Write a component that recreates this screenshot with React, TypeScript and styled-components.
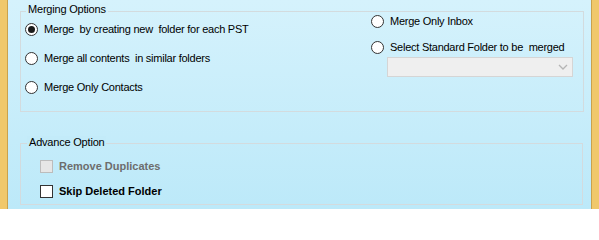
import React from "react";
import styled, { createGlobalStyle } from "styled-components";

const Global = createGlobalStyle`
  html, body { margin: 0; padding: 0; }
  body { font-family: "Liberation Sans", Arial, sans-serif; }
`;

const Frame = styled.div`
  width: 599px;
  height: 209px;
  display: flex;
  overflow: hidden;
`;

const SideBar = styled.div<{ $side: "left" | "right" }>`
  width: 8px;
  flex: none;
  background: #f0c86b;
  ${(p) =>
    p.$side === "left"
      ? "border-right: 1px solid #c9a24e; width: 7px;"
      : "border-left: 1px solid #c9a24e; width: 7px;"}
`;

const Content = styled.div`
  flex: 1;
  background: linear-gradient(to bottom, #d5f2fc 0%, #bce9f9 100%);
  padding: 11px 7px 0 12px;
  display: flex;
  flex-direction: column;
`;

const Group = styled.div<{ $h: number; $mt?: number; $mr?: number }>`
  position: relative;
  box-sizing: border-box;
  height: ${(p) => p.$h}px;
  margin-top: ${(p) => p.$mt ?? 0}px;
  margin-right: ${(p) => p.$mr ?? 0}px;
  border: 1px solid #d3dbde;
`;

const Legend = styled.span<{ $top: number; $left: number; $bg: string }>`
  position: absolute;
  top: ${(p) => p.$top}px;
  left: ${(p) => p.$left}px;
  padding: 0 2px;
  background: ${(p) => p.$bg};
  font-size: 11px;
  line-height: 13px;
  letter-spacing: -0.2px;
  color: #000;
  white-space: pre;
`;

const Columns = styled.div`
  display: grid;
  grid-template-columns: 346px 1fr;
  align-items: start;
  padding-left: 4px;
`;

const Column = styled.div<{ $pt: number; $gap: number }>`
  display: flex;
  flex-direction: column;
  padding-top: ${(p) => p.$pt}px;
  gap: ${(p) => p.$gap}px;
`;

const OptionRow = styled.label`
  display: flex;
  align-items: center;
  height: 16px;
  gap: 6px;
  font-size: 11px;
  letter-spacing: -0.25px;
  color: #000;
  white-space: pre;
`;

const RadioCircle = styled.span<{ $checked?: boolean }>`
  box-sizing: border-box;
  width: 13px;
  height: 13px;
  flex: none;
  border-radius: 50%;
  border: 1px solid #333;
  background: #fff;
  display: flex;
  align-items: center;
  justify-content: center;
  &::after {
    content: "";
    width: 7px;
    height: 7px;
    border-radius: 50%;
    background: ${(p) => (p.$checked ? "#1b1b1b" : "transparent")};
  }
`;

const Combo = styled.div`
  box-sizing: border-box;
  margin-top: 2px;
  margin-left: 16px;
  width: 186px;
  height: 20px;
  background: #efefef;
  border: 1px solid #d5d5d5;
  display: flex;
  align-items: center;
  justify-content: flex-end;
  padding-right: 4px;
`;

const CheckList = styled.div`
  display: flex;
  flex-direction: column;
  gap: 9px;
  padding: 14px 0 0 19px;
`;

const CheckRow = styled.label<{ $disabled?: boolean }>`
  display: flex;
  align-items: center;
  height: 16px;
  gap: 6px;
  font-size: 11px;
  font-weight: bold;
  color: ${(p) => (p.$disabled ? "#6d6d6d" : "#000")};
  white-space: pre;
`;

const CheckBox = styled.span<{ $disabled?: boolean }>`
  box-sizing: border-box;
  width: 13px;
  height: 13px;
  flex: none;
  border: 1px solid ${(p) => (p.$disabled ? "#bcbcbc" : "#333")};
  background: ${(p) => (p.$disabled ? "#e6e6e6" : "#fff")};
`;

const Radio = ({ label, checked }: { label: string; checked?: boolean }) => (
  <OptionRow>
    <RadioCircle $checked={checked} />
    {label}
  </OptionRow>
);

export default function App() {
  return (
    <>
      <Global />
      <Frame>
        <SideBar $side="left" />
        <Content>
          <Group $h={101}>
            <Legend $top={-9} $left={5} $bg="#d4f1fb">
              Merging Options
            </Legend>
            <Columns>
              <Column $pt={9} $gap={13}>
                <Radio checked label="Merge  by creating new  folder for each PST" />
                <Radio label="Merge all contents  in similar folders" />
                <Radio label="Merge Only Contacts" />
              </Column>
              <Column $pt={1} $gap={10}>
                <Radio label="Merge Only Inbox" />
                <div>
                  <Radio label="Select Standard Folder to be  merged" />
                  <Combo>
                    <svg width="10" height="6" viewBox="0 0 10 6">
                      <path d="M1 1 L5 5 L9 1" fill="none" stroke="#b5b5b5" strokeWidth="1.3" />
                    </svg>
                  </Combo>
                </div>
              </Column>
            </Columns>
          </Group>
          <Group $h={62} $mt={31} $mr={1}>
            <Legend $top={-8} $left={6} $bg="#c3ebf9">
              Advance Option
            </Legend>
            <CheckList>
              <CheckRow $disabled>
                <CheckBox $disabled />
                Remove Duplicates
              </CheckRow>
              <CheckRow>
                <CheckBox />
                Skip Deleted Folder
              </CheckRow>
            </CheckList>
          </Group>
        </Content>
        <SideBar $side="right" />
      </Frame>
    </>
  );
}
